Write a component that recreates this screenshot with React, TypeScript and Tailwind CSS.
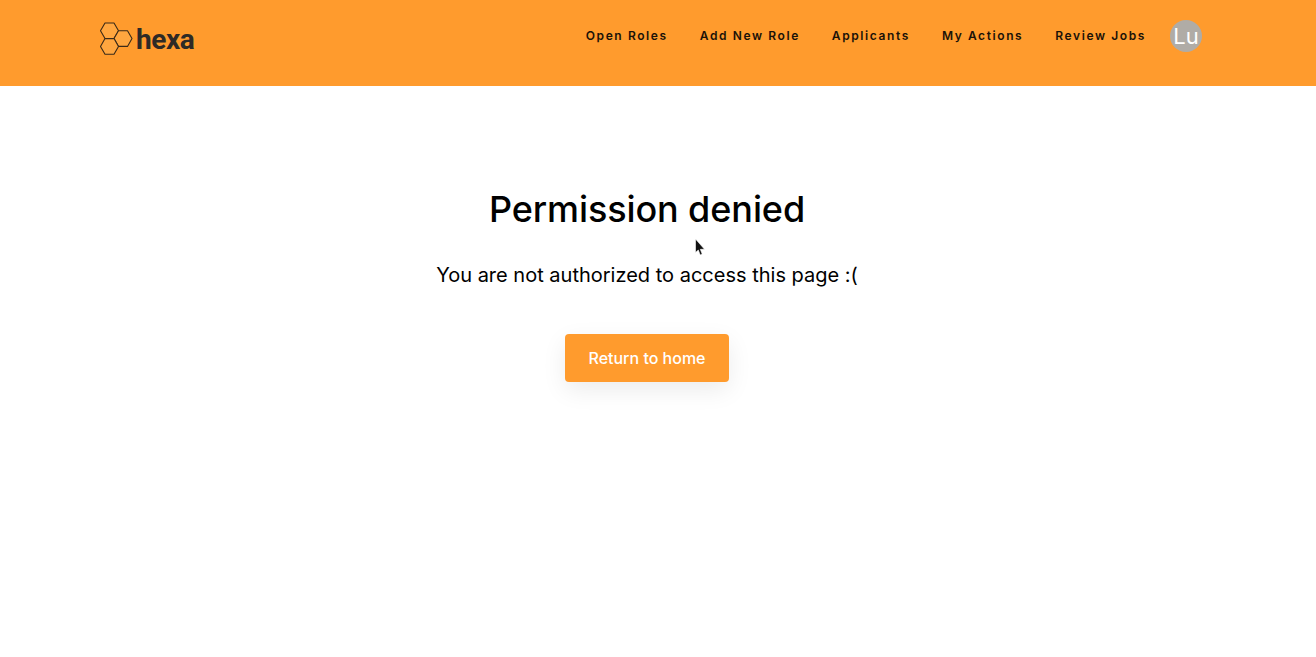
import React from 'react'

const links = ['Open Roles', 'Add New Role', 'Applicants', 'My Actions', 'Review Jobs']

const Logo = () => {
    return (
        <div className="flex items-center gap-[3px]">
            <svg width="33" height="33" viewBox="0 0 33 33" fill="#ffa63f" stroke="#3a2a18" strokeWidth="1.1" strokeLinejoin="round">
                <path d="M5 1 H14 L18.5 8.8 L14 16.6 H5 L0.5 8.8 Z" />
                <path d="M18.5 8.8 H27.5 L32 16.6 L27.5 24.4 H18.5 L14 16.6 Z" />
                <path d="M5 16.6 H14 L18.5 24.4 L14 32.2 H5 L0.5 24.4 Z" />
            </svg>
            <span className="font-['Roboto',sans-serif] text-[28px] font-bold leading-none text-[#2e2a26] tracking-[-0.4px] mt-[3px]">hexa</span>
        </div>
    )
}

const App = () => {
    return (
        <div className="relative min-h-[657px] bg-white font-['Inter',sans-serif]">
            <header className="h-[86px] bg-[#ff9b2d] pl-[100px] pr-[114px] pt-[20px] flex justify-between items-start">
                <div className="pt-[1.5px]"><Logo /></div>
                <div className="flex items-start">
                    <nav className="flex gap-[32px] pt-[8px] mr-[24px]">
                        {links.map((l) => (
                            <a key={l} className="text-[12px] leading-[16px] font-semibold tracking-[1.6px] text-[#1a1208]">{l}</a>
                        ))}
                    </nav>
                    <div className="w-[32px] h-[32px] rounded-full bg-[#b0aca6] text-white text-[22px] leading-[33px] text-center">Lu</div>
                </div>
            </header>

            <main className="w-[1294px] flex flex-col items-center pt-[98px]">
                <h1 className="text-[36px] leading-[50px] font-medium tracking-[-0.1px] text-black">Permission denied</h1>
                <p className="mt-[27px] text-[20px] leading-[28px] text-black">You are not authorized to access this page :(</p>
                <button className="mt-[45px] w-[164px] h-[48px] rounded-[4px] bg-[#ff9b2d] text-white text-[16px] font-medium shadow-[0_8px_24px_rgba(0,0,0,0.08)]">Return to home</button>
            </main>

            {/* mouse pointer from the capture */}
            <svg className="absolute left-[694px] top-[238px]" width="12" height="19" viewBox="0 0 12 19">
                <path d="M1.5 1 V14.5 L4.3 12 L6.2 17 L8.2 16 L6.3 11.3 H10.5 Z" fill="#111" stroke="#fff" strokeWidth="0.6" />
            </svg>
        </div>
    )
}

export default App
